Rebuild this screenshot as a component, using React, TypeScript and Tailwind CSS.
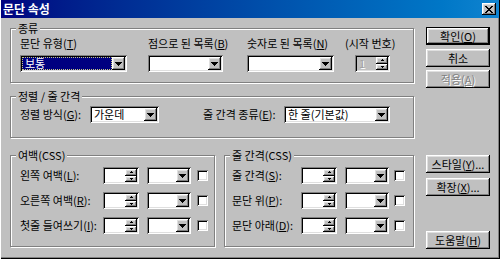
import type { ReactNode } from 'react';

const raised =
  'shadow-[inset_-1px_-1px_0_#000,inset_1px_1px_0_#fff,inset_-2px_-2px_0_#808080,inset_2px_2px_0_#dfdfdf]';
const sunken =
  'shadow-[inset_1px_1px_0_#808080,inset_-1px_-1px_0_#fff,inset_2px_2px_0_#000,inset_-2px_-2px_0_#dfdfdf]';
const etched = 'border border-[#808080] shadow-[inset_1px_1px_0_#fff,1px_1px_0_#fff]';

function U({ children }: { children: ReactNode }) {
  return <span className="underline underline-offset-[1px]">{children}</span>;
}

function DownArrow() {
  return (
    <svg width="7" height="4" viewBox="0 0 7 4" shapeRendering="crispEdges">
      <path d="M0 0h7v1H0zM1 1h5v1H1zM2 2h3v1H2zM3 3h1v1H3z" fill="#000" />
    </svg>
  );
}

function Combo({ className, value, selected }: { className: string; value?: string; selected?: boolean }) {
  return (
    <div className={`flex h-[17px] bg-white p-[2px] ${sunken} ${className}`}>
      <div
        className={`flex flex-1 items-center pl-[2px] leading-none ${
          selected ? 'border border-dotted border-[#c8c880] bg-[#000080] text-white' : 'text-black'
        }`}
      >
        {value}
      </div>
      <div className={`flex w-[13px] items-center justify-center bg-[#c0c0c0] ${raised}`}>
        <DownArrow />
      </div>
    </div>
  );
}

function SpinHalf({ up }: { up?: boolean }) {
  return (
    <div className={`flex flex-1 items-center justify-center bg-[#c0c0c0] ${raised}`}>
      <svg width="3" height="2" viewBox="0 0 3 2" shapeRendering="crispEdges">
        <path d={up ? 'M1 0h1v1H1zM0 1h3v1H0z' : 'M0 0h3v1H0zM1 1h1v1H1z'} fill="#000" />
      </svg>
    </div>
  );
}

function Spin({ className, disabled }: { className: string; disabled?: boolean }) {
  return (
    <div className={`flex h-[17px] p-[2px] ${disabled ? 'bg-[#c0c0c0]' : 'bg-white'} ${sunken} ${className}`}>
      <div className="flex flex-1 items-center pl-[2px] leading-none">
        {disabled && <span className="text-[#a0a0a0] [text-shadow:1px_1px_0_#fff]">1</span>}
      </div>
      <div className="flex w-[12px] flex-col">
        <SpinHalf up />
        <SpinHalf />
      </div>
    </div>
  );
}

function Check() {
  return <div className={`h-[11px] w-[11px] bg-white ${sunken}`} />;
}

function Button({ children, isDefault, disabled, className = '' }: { children: ReactNode; isDefault?: boolean; disabled?: boolean; className?: string }) {
  return (
    <div className={`h-[18px] w-[64px] ${isDefault ? 'border border-black' : ''} ${className}`}>
      <div
        className={`flex h-full w-full items-center justify-center leading-none ${raised} ${
          disabled ? 'text-[#808080] [text-shadow:1px_1px_0_#fff]' : 'text-black'
        }`}
      >
        {children}
      </div>
    </div>
  );
}

function Group({ title, className, children }: { title: string; className: string; children: ReactNode }) {
  return (
    <div className={`relative ${etched} ${className}`}>
      <div className="absolute left-[5px] top-[-7px] bg-[#c0c0c0] px-[2px] leading-[13px]">{title}</div>
      {children}
    </div>
  );
}

function MarginRow({ label, second }: { label: ReactNode; second?: boolean }) {
  return (
    <div className="flex h-[17px] items-center">
      <div className={second ? 'w-[69px]' : 'w-[83px]'}>{label}</div>
      <Spin className="w-[36px]" />
      <Combo className="ml-[8px] w-[44px]" />
      <div className={second ? 'ml-[5px]' : 'ml-[6px]'}>
        <Check />
      </div>
    </div>
  );
}

export default function App() {
  return (
    <div className="flex h-[259px] w-[500px] flex-col bg-[#c0c0c0] font-['Noto_Sans_CJK_KR',sans-serif] text-[11px] text-black shadow-[inset_1px_0_0_#fff,inset_-1px_-1px_0_#000,inset_-2px_-2px_0_#808080]">
      {/* Title bar */}
      <div className="mx-[1px] flex h-[18px] items-center justify-between bg-gradient-to-r from-[#000080] to-[#1084d0] pl-[2px] pr-[3px]">
        <span className="text-[12px] font-bold text-white">문단 속성</span>
        <div className={`flex h-[12px] w-[14px] items-center justify-center bg-[#c0c0c0] ${raised}`}>
          <svg width="8" height="7" viewBox="0 0 8 7" shapeRendering="crispEdges">
            <path d="M0 0h2v1H0zM6 0h2v1H6zM1 1h2v1H1zM5 1h2v1H5zM2 2h4v1H2zM3 3h2v1H3zM2 4h4v1H2zM1 5h2v1H1zM5 5h2v1H5zM0 6h2v1H0zM6 6h2v1H6z" fill="#000" />
          </svg>
        </div>
      </div>

      <div className="flex flex-1 pl-[10px]">
        {/* Left column */}
        <div className="flex w-[404px] flex-col pt-[10px]">
          <Group title="종류" className="h-[55px]">
            <div className="flex pl-[9px] pt-[8px]">
              <div className="w-[128px]">
                <div className="mb-[5px] h-[13px] leading-[13px]">
                  문단 유형(<U>T</U>)
                </div>
                <Combo className="w-[107px]" value="보통" selected />
              </div>
              <div className="w-[99px]">
                <div className="mb-[5px] h-[13px] leading-[13px]">
                  점으로 된 목록(<U>B</U>)
                </div>
                <Combo className="w-[75px]" />
              </div>
              <div className="w-[98px]">
                <div className="mb-[5px] h-[13px] leading-[13px]">
                  숫자로 된 목록(<U>N</U>)
                </div>
                <Combo className="w-[87px]" />
              </div>
              <div>
                <div className="mb-[5px] h-[13px] leading-[13px]">(시작 번호)</div>
                <Spin className="ml-[10px] w-[35px]" disabled />
              </div>
            </div>
          </Group>

          <Group title="정렬 / 줄 간격" className="mt-[13px] h-[42px]">
            <div className="flex items-center pl-[9px] pt-[9px]">
              <div className="w-[70px]">
                정렬 방식(<U>G</U>):
              </div>
              <Combo className="w-[69px]" value="가운데" />
              <div className="ml-[44px] w-[81px]">
                줄 간격 종류(<U>E</U>):
              </div>
              <Combo className="w-[106px]" value="한 줄(기본값)" />
            </div>
          </Group>

          <div className="mt-[17px] flex gap-[9px]">
            <Group title="여백(CSS)" className="h-[92px] w-[205px]">
              <div className="flex flex-col gap-[8px] pl-[9px] pt-[11px]">
                <MarginRow label={<>왼쪽 여백(<U>L</U>):</>} />
                <MarginRow label={<>오른쪽 여백(<U>R</U>):</>} />
                <MarginRow label={<>첫줄 들여쓰기(<U>I</U>):</>} />
              </div>
            </Group>
            <Group title="줄 간격(CSS)" className="h-[92px] w-[190px]">
              <div className="flex flex-col gap-[8px] pl-[7px] pt-[11px]">
                <MarginRow second label={<>줄 간격(<U>S</U>):</>} />
                <MarginRow second label={<>문단 위(<U>P</U>):</>} />
                <MarginRow second label={<>문단 아래(<U>D</U>):</>} />
              </div>
            </Group>
          </div>
        </div>

        {/* Right column */}
        <div className="ml-[12px] flex flex-col pt-[9px]">
          <Button isDefault>
            확인(<U>O</U>)
          </Button>
          <Button className="mt-[4px]">취소</Button>
          <Button className="mt-[3px]" disabled>
            적용(<U>A</U>)
          </Button>
          <Button className="mt-[67px]">
            스타일(<U>Y</U>)...
          </Button>
          <Button className="mt-[5px]">
            확장(<U>X</U>)...
          </Button>
          <Button className="mt-[35px]">
            도움말(<U>H</U>)
          </Button>
        </div>
      </div>
    </div>
  );
}
